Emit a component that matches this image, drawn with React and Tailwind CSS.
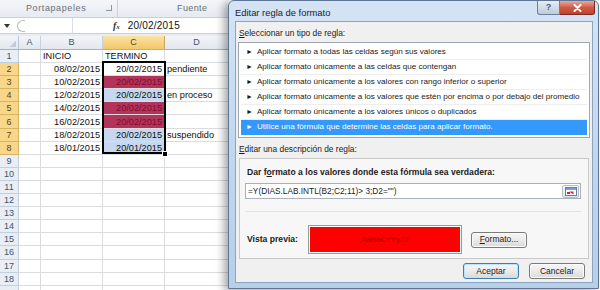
import React from 'react';

const rows = [
  { n: 1, b: 'INICIO', c: 'TERMINO', d: '', head: true },
  { n: 2, b: '08/02/2015', c: '20/02/2015', d: 'pendiente', tone: 'white' },
  { n: 3, b: '10/02/2015', c: '20/02/2015', d: '', tone: 'red' },
  { n: 4, b: '12/02/2015', c: '20/02/2015', d: 'en proceso', tone: 'blue' },
  { n: 5, b: '14/02/2015', c: '20/02/2015', d: '', tone: 'red' },
  { n: 6, b: '16/02/2015', c: '20/02/2015', d: '', tone: 'red' },
  { n: 7, b: '18/02/2015', c: '20/02/2015', d: 'suspendido', tone: 'blue' },
  { n: 8, b: '18/01/2015', c: '20/01/2015', d: '', tone: 'blue' },
  { n: 9 }, { n: 10 }, { n: 11 }, { n: 12 }, { n: 13 }, { n: 14 },
  { n: 15 }, { n: 16 }, { n: 17 }, { n: 18 }, { n: 19, hidden: true },
];

const toneClass = {
  white: 'bg-white text-[#111]',
  red: 'bg-[#b3345a] text-[#7e0c2c]',
  blue: 'bg-[#c5d8ef] text-[#111]',
};

const rules = [
  'Aplicar formato a todas las celdas según sus valores',
  'Aplicar formato únicamente a las celdas que contengan',
  'Aplicar formato únicamente a los valores con rango inferior o superior',
  'Aplicar formato únicamente a los valores que estén por encima o por debajo del promedio',
  'Aplicar formato únicamente a los valores únicos o duplicados',
  'Utilice una fórmula que determine las celdas para aplicar formato.',
];

const Sheet = () => {
  return (
    <div className="relative w-[228px] shrink-0 flex flex-col bg-white font-['Liberation_Sans',sans-serif]">
      {/* ribbon group labels */}
      <div className="h-[18px] flex items-center bg-gradient-to-b from-[#f4f6f9] to-[#e6ebf1] border-b border-[#c5d0dc] text-[9px] text-[#6a6f78]">
        <div className="w-[118px] h-full flex items-center border-r border-[#c9d2dd] relative">
          <span className="ml-[26px] tracking-[0.6px]">Portapapeles</span>
          <span className="absolute right-[5px] top-[5px] w-[6px] h-[6px] border-r border-b border-[#8d96a3]" />
        </div>
        <span className="ml-[59px] tracking-[0.4px]">Fuente</span>
      </div>
      {/* formula bar */}
      <div className="h-[16px] flex items-center bg-white border-b border-[#c6cfda]">
        <div className="w-[14px] h-full flex items-center justify-center">
          <span className="w-0 h-0 border-l-[3px] border-r-[3px] border-t-[4px] border-l-transparent border-r-transparent border-t-[#333]" />
        </div>
        <div className="ml-[3px] w-[8px] h-[12px] rounded-l-full border-l border-t border-b border-[#b5bcc6]" />
        <div className="ml-auto w-[156px] h-full flex items-center border-l border-[#d9dee5]">
          <span className="ml-[40px] font-['Liberation_Serif',serif] italic font-bold text-[10px] text-[#333]">f<span className="text-[7px]">x</span></span>
          <span className="ml-[8px] text-[10px] text-[#111] tracking-[0.2px]">20/02/2015</span>
        </div>
      </div>
      <div className="h-[2px] bg-[#e8edf3]" />
      {/* column headers */}
      <div className="flex h-[14px] text-[9px] text-[#44546a] border-b border-[#9fb3c8]">
        <div className="w-[19px] bg-gradient-to-b from-[#f3f5f8] to-[#e2e7ee] border-r border-[#b7c6d6] relative">
          <span className="absolute right-[2px] bottom-[2px] w-[6px] h-[6px] bg-[linear-gradient(135deg,transparent_50%,#c3ccd8_50%)]" />
        </div>
        <div className="w-[22px] flex items-center justify-center bg-gradient-to-b from-[#f3f5f8] to-[#e2e7ee] border-r border-[#c5d2df]">A</div>
        <div className="w-[62px] flex items-center justify-center bg-gradient-to-b from-[#f3f5f8] to-[#e2e7ee] border-r border-[#c5d2df]">B</div>
        <div className="w-[62px] flex items-center justify-center bg-gradient-to-b from-[#fbe3a5] to-[#f2c766] border-r border-[#c5a65a] text-[#5b4515]">C</div>
        <div className="flex-1 flex items-center justify-center bg-gradient-to-b from-[#f3f5f8] to-[#e2e7ee]">D</div>
      </div>
      {/* rows */}
      <div className="flex flex-col text-[9.2px]">
        {rows.map((r) => {
          const sel = r.n >= 2 && r.n <= 8;
          return (
            <div key={r.n} className="flex h-[13.1px] leading-[12px]">
              <div
                className={`w-[19px] flex items-center justify-center border-r border-b text-[9px] ${
                  sel
                    ? 'bg-[#f8d68a] border-[#d9b35f] text-[#5b4515]'
                    : 'bg-[#e9eef5] border-[#c2cedb] text-[#3d5573]'
                }`}
              >
                {r.hidden ? '' : r.n}
              </div>
              <div className="w-[22px] border-r border-b border-[#dadcdf]" />
              <div className={`w-[62px] border-r border-b border-[#dadcdf] flex items-center px-[2px] ${r.head ? 'justify-start' : 'justify-end'} text-[#111]`}>
                {r.b}
              </div>
              <div
                className={`w-[62px] border-r border-b border-[#dadcdf] flex items-center px-[2px] ${
                  r.head ? 'justify-start text-[#111]' : 'justify-end'
                } ${r.tone ? toneClass[r.tone] : ''}`}
              >
                {r.c}
              </div>
              <div className="flex-1 border-b border-[#dadcdf] flex items-center px-[2px] text-[#111]">{r.d}</div>
            </div>
          );
        })}
      </div>
      {/* selection border over C2:C8 */}
      <div className="absolute left-[102px] top-[61px] w-[64px] h-[93px] border-2 border-black" />
      <div className="absolute left-[162px] top-[151px] w-[6px] h-[6px] bg-black border border-white" />
    </div>
  );
};

const Button = ({ children, primary, className = '' }) => (
  <div
    className={`h-[16px] flex items-center justify-center rounded-[3px] border text-[8.5px] text-[#1b1b1b] bg-gradient-to-b from-[#f6f6f6] via-[#ebebeb] to-[#d9d9d9] ${
      primary ? 'border-[#3c7fb1] shadow-[inset_0_0_0_1px_#bfe3f8]' : 'border-[#7a7a7a] shadow-[inset_0_0_0_1px_#fcfcfc]'
    } ${className}`}
  >
    {children}
  </div>
);

const Dialog = () => {
  return (
    <div className="relative w-[371px] h-[289px] mr-[1px] shrink-0 flex flex-col rounded-t-[6px] border border-[#5d7696] bg-gradient-to-b from-[#d4e4f5] via-[#c3d7ee] to-[#b8cfe9] shadow-[-4px_2px_8px_rgba(0,0,0,0.35)] font-['Liberation_Sans',sans-serif]">
      {/* title bar */}
      <div className="h-[20px] flex items-start shrink-0">
        <span className="ml-[6px] mt-[5px] text-[9.4px] text-[#1c1c1c]">Editar regla de formato</span>
        <div className="ml-auto mr-[3px] flex">
          <div className="w-[23px] h-[14px] rounded-bl-[3px] border border-t-0 border-[#6c7f98] bg-gradient-to-b from-[#e6edf5] to-[#bdcbdc] flex items-center justify-center text-[9px] font-bold text-[#4b5d75]">
            ?
          </div>
          <div className="w-[35px] h-[14px] rounded-br-[3px] border border-l-0 border-t-0 border-[#7c2a22] bg-gradient-to-b from-[#e9a99b] via-[#cf5a45] to-[#c2402b] flex items-center justify-center">
            <svg width="9" height="8" viewBox="0 0 9 8">
              <path d="M1.5 1 L7.5 7 M7.5 1 L1.5 7" stroke="#fff" strokeWidth="2" strokeLinecap="round" />
            </svg>
          </div>
        </div>
      </div>
      {/* client area */}
      <div className="flex-1 ml-[6px] mr-[5px] mb-[5px] border border-[#8ea3bf] bg-[#f0f0f0] flex flex-col px-[2px] text-[8.4px] text-[#1b1b1b]">
        <div className="mt-[6px] h-[11px] leading-[11px] pl-[1px]">
          <span className="underline">S</span>eleccionar un tipo de regla:
        </div>
        <div className="mt-[3px] h-[96px] border border-[#9fa7b2] bg-white pt-[2px] px-[2px] flex flex-col text-[8.1px]">
          {rules.map((t, i) => {
            const active = i === rules.length - 1;
            return (
              <div
                key={i}
                className={`h-[15px] shrink-0 flex items-center pl-[5px] ${
                  active ? 'bg-[#3399ff] text-white' : 'border-b border-[#eeeeee] text-[#1b1b1b]'
                }`}
              >
                <span className="text-[7px] mr-[4px]">►</span>
                <span className="whitespace-nowrap">{t}</span>
              </div>
            );
          })}
        </div>
        <div className="mt-[6px] h-[11px] leading-[11px] pl-[1px]">
          <span className="underline">E</span>ditar una descripción de regla:
        </div>
        <div className="mt-[3px] mx-[1px] h-[101px] border border-[#c9c9c9] bg-[#f7f7f7] flex flex-col">
          <div className="mt-[8px] ml-[7px] h-[11px] leading-[11px] font-bold text-[8.6px]">
            Dar f<span className="underline">o</span>rmato a los valores donde esta fórmula sea verdadera:
          </div>
          <div className="mt-[5px] ml-[5px] mr-[7px] h-[16px] border border-[#aab1bb] bg-white flex items-center pl-[2px]">
            <span className="text-[8.3px]">=Y(DIAS.LAB.INTL(B2;C2;11)&gt; 3;D2="")</span>
            <div className="ml-auto mr-[1px] w-[17px] h-[13px] rounded-[2px] border border-[#b6bec9] bg-gradient-to-b from-[#f7f9fc] to-[#dfe6ee] flex items-center justify-center">
              <svg width="12" height="9" viewBox="0 0 12 9">
                <rect x="0.5" y="0.5" width="11" height="8" fill="#fff" stroke="#6b7f99" />
                <rect x="1" y="1" width="10" height="2" fill="#7aa0cf" />
                <path d="M4 4.5 L8.5 4.5 L8.5 7.5 Z" fill="#d8262c" />
                <rect x="2" y="5" width="3" height="2" fill="#d8262c" />
              </svg>
            </div>
          </div>
          <div className="mt-[12px] mx-[6px] h-px bg-[#e2e2e2]" />
          <div className="mt-[13px] flex items-center">
            <span className="ml-[7px] w-[61px] font-bold text-[8.6px]">Vista previa:</span>
            <div className="w-[154px] h-[29px] border border-[#9a9a9a] bg-white p-[1px]">
              <div className="w-full h-full bg-[#ff0000] flex items-center justify-center text-[8px] text-[#a30000]">
                AaBbCcYyZz
              </div>
            </div>
            <Button className="ml-[9px] w-[56px]">
              <span>
                <span className="underline">F</span>ormato...
              </span>
            </Button>
          </div>
        </div>
        <div className="mt-[4px] flex justify-end pr-[5px] gap-[10px]">
          <Button primary className="w-[56px]">Aceptar</Button>
          <Button className="w-[56px]">Cancelar</Button>
        </div>
      </div>
    </div>
  );
};

export default function App() {
  return (
    <div className="w-[600px] h-[290px] overflow-hidden bg-white flex items-start">
      <Sheet />
      <Dialog />
    </div>
  );
}
